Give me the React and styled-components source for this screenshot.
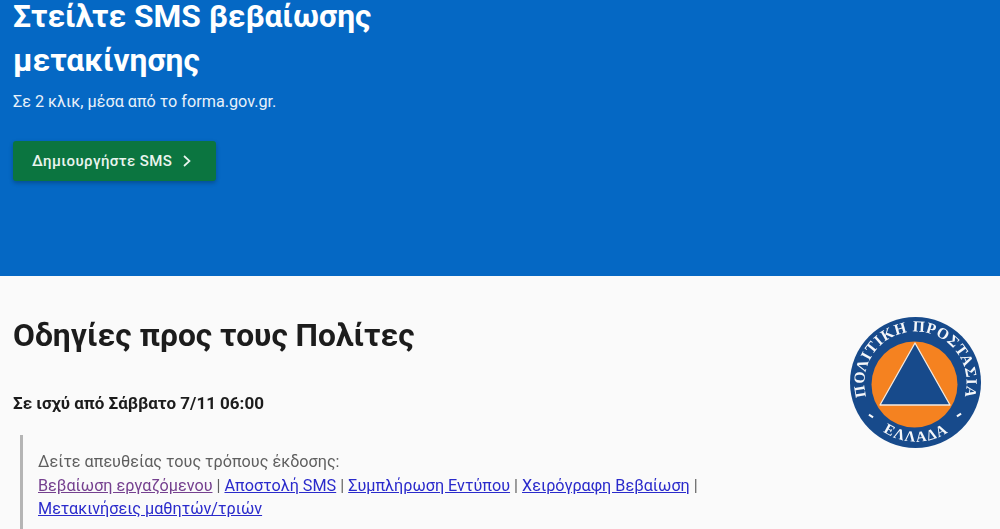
import React from 'react'
import styled, { createGlobalStyle } from 'styled-components'

const GlobalStyle = createGlobalStyle`
  html, body {
    margin: 0;
    height: 100%;
    overflow: hidden;
    background: #fafafa;
    font-family: Roboto, "Liberation Sans", sans-serif;
  }
`

// the reference is an upscaled capture, so everything is a bit soft
const Page = styled.div`
  filter: blur(0.45px);
`

const Hero = styled.section`
  box-sizing: border-box;
  height: 276px;
  padding: 0 13px;
  background: #0568c4;
  color: #fff;
  overflow: hidden;
`

const HeroTitle = styled.h1`
  margin: -5px 0 0;
  width: 400px;
  font-size: 31.7px;
  line-height: 44px;
  font-weight: 700;
`

const HeroLead = styled.p`
  margin: 8px 0 0;
  font-size: 16.2px;
  line-height: 22px;
  color: #e8f1fa;
`

const CreateButton = styled.a`
  display: inline-flex;
  align-items: center;
  gap: 9px;
  box-sizing: border-box;
  width: 203px;
  height: 40px;
  margin-top: 28px;
  padding-left: 19px;
  background: #0b7540;
  border-radius: 3px;
  box-shadow: 0 2px 4px rgba(0, 0, 0, 0.25);
  color: #e9f4ee;
  font-size: 15px;
  font-weight: 500;
  letter-spacing: 0.4px;
`

const Content = styled.main`
  display: flex;
  justify-content: space-between;
  padding: 0 18px 0 13px;
`

const Article = styled.div`
  flex: 1;
  min-width: 0;
`

const PageTitle = styled.h2`
  margin: 41px 0 0;
  font-size: 31.75px;
  line-height: 38px;
  font-weight: 700;
  color: #1c1c1c;
`

const EffectiveDate = styled.p`
  margin: 37px 0 0;
  font-size: 17px;
  line-height: 22px;
  font-weight: 700;
  color: #1c1c1c;
`

const Quote = styled.blockquote`
  margin: 21px 0 0 7px;
  padding: 15px 0 0 15px;
  border-left: 3px solid #b5b5b5;
  width: 690px;
  height: 100px;
  font-size: 16.2px;
  line-height: 23.6px;
  color: #5f5f5f;
`

const QuoteLink = styled.a`
  color: ${({ $visited }) => ($visited ? '#75408f' : '#2a2acb')};
  text-decoration: underline;
`

const Logo = styled.svg`
  flex: none;
  width: 132px;
  height: 132px;
  margin-top: 41px;
`

const LogoText = styled.text`
  font-family: "Liberation Serif", serif;
  font-weight: 700;
  fill: #f5f7fa;
`

const CivilProtectionLogo = () => (
  <Logo viewBox="0 0 132 132">
    <defs>
      <path id="logoTop" d="M 16.6 80 A 51 51 0 1 1 114.4 80" />
      <path id="logoBottom" d="M 18 100 A 59 59 0 0 0 114 100" />
    </defs>
    <circle cx="65.5" cy="65.5" r="65.5" fill="#174a8b" />
    <circle cx="64.5" cy="67.5" r="43" fill="#f58220" />
    <polygon points="65,26 30,88 100,88" fill="#174a8b" stroke="#f3e9df" strokeWidth="1.3" strokeLinejoin="round" />
    <LogoText fontSize="15.5">
      <textPath href="#logoTop" startOffset="50%" textAnchor="middle" textLength="188" lengthAdjust="spacing">ΠΟΛΙΤΙΚΗ ΠΡΟΣΤΑΣΙΑ</textPath>
    </LogoText>
    <LogoText fontSize="15" letterSpacing="1.2">
      <textPath href="#logoBottom" startOffset="50%" textAnchor="middle">ΕΛΛΑΔΑ</textPath>
    </LogoText>
    <rect x="18.5" y="98" width="5" height="2" fill="#f5f7fa" transform="rotate(35 21 99)" />
    <rect x="106.5" y="97" width="5" height="2" fill="#f5f7fa" transform="rotate(-35 109 98)" />
  </Logo>
)

const Chevron = () => (
  <svg width="12" height="14" viewBox="0 0 12 14" fill="none" stroke="#e9f4ee" strokeWidth="1.7">
    <path d="M3 2l5.5 5L3 12" />
  </svg>
)

export default function App() {
  return (
    <Page>
      <GlobalStyle />
      <Hero>
        <HeroTitle>Στείλτε SMS βεβαίωσης μετακίνησης</HeroTitle>
        <HeroLead>Σε 2 κλικ, μέσα από το forma.gov.gr.</HeroLead>
        <CreateButton>Δημιουργήστε SMS <Chevron /></CreateButton>
      </Hero>
      <Content>
        <Article>
          <PageTitle>Οδηγίες προς τους Πολίτες</PageTitle>
          <EffectiveDate>Σε ισχύ από Σάββατο 7/11 06:00</EffectiveDate>
          <Quote>
            Δείτε απευθείας τους τρόπους έκδοσης:<br />
            <QuoteLink $visited href="#a">Βεβαίωση εργαζόμενου</QuoteLink> | <QuoteLink href="#b">Αποστολή SMS</QuoteLink> | <QuoteLink href="#c">Συμπλήρωση Εντύπου</QuoteLink> | <QuoteLink href="#d">Χειρόγραφη Βεβαίωση</QuoteLink> | <QuoteLink href="#e">Μετακινήσεις μαθητών/τριών</QuoteLink>
          </Quote>
        </Article>
        <CivilProtectionLogo />
      </Content>
    </Page>
  )
}
